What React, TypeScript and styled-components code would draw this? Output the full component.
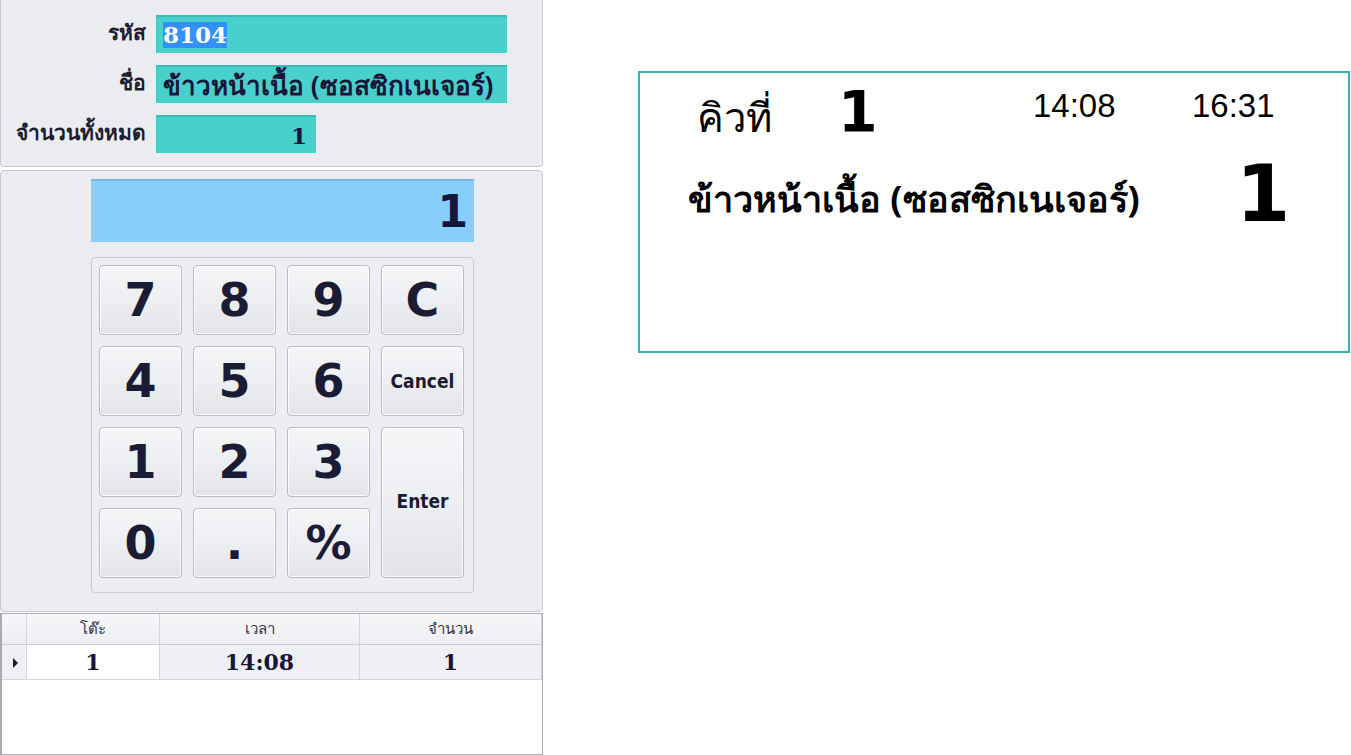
import React from 'react'
import styled, { createGlobalStyle } from 'styled-components'

const GlobalStyle = createGlobalStyle`
  html, body {
    margin: 0;
    padding: 0;
    background: #ffffff;
  }
  body {
    font-family: 'Noto Sans', 'DejaVu Sans', sans-serif;
    color: #1b1b33;
  }
`

const Page = styled.div`
  display: flex;
  align-items: flex-start;
  width: 1351px;
  height: 755px;
  overflow: hidden;
`

const LeftPanel = styled.div`
  width: 543px;
  height: 755px;
  display: flex;
  flex-direction: column;
  gap: 3px;
  background: #ffffff;
  flex-shrink: 0;
`

const Group = styled.div`
  background: #ebecf0;
  border: 1px solid #c6c8cd;
  border-radius: 4px;
  box-sizing: border-box;
`

const InfoGroup = styled(Group)`
  height: 167px;
  border-top: none;
  border-radius: 0 0 4px 4px;
  padding-top: 15px;
  display: flex;
  flex-direction: column;
  gap: 12px;
`

const FieldRow = styled.div`
  display: flex;
  align-items: center;
  gap: 10px;
  height: 38px;
`

const Label = styled.div`
  width: 145px;
  text-align: right;
  font-size: 21px;
  font-weight: 700;
  color: #1d1d30;
  white-space: nowrap;
  margin-top: -4px;
`

const Field = styled.div<{ w: number; align?: string }>`
  width: ${({ w }) => w}px;
  height: 38px;
  box-sizing: border-box;
  background: #48d1cc;
  border-top: 2px solid #3fb9b5;
  border-left: 1px solid #45c4bf;
  padding: 0 9px 0 6px;
  display: flex;
  align-items: center;
  justify-content: ${({ align }) => (align === 'right' ? 'flex-end' : 'flex-start')};
  font-family: 'DejaVu Serif', 'Liberation Serif', serif;
  font-size: 23px;
  font-weight: 700;
  color: #16163a;
  white-space: nowrap;
  overflow: hidden;
`

const ThaiValue = styled.span`
  font-family: 'Noto Sans', 'DejaVu Sans', sans-serif;
  font-size: 26px;
  font-weight: 700;
`

const Selected = styled.span`
  background: #3390ff;
  color: #ffffff;
  line-height: 26px;
`

const PadGroup = styled(Group)`
  height: 442px;
  padding: 8px 0 0 90px;
`

const Display = styled.div`
  width: 383px;
  height: 63px;
  box-sizing: border-box;
  background: #87cefa;
  border-top: 2px solid #79b8e0;
  display: flex;
  align-items: center;
  justify-content: flex-end;
  padding-right: 6px;
  font-family: 'DejaVu Sans', sans-serif;
  font-size: 44px;
  font-weight: 700;
  color: #16163a;
`

const Keypad = styled.div`
  margin-top: 15px;
  width: 383px;
  height: 336px;
  box-sizing: border-box;
  border: 1px solid #c9cbd0;
  border-radius: 4px;
  background: #eceef1;
  padding: 7px 0 0 7px;
  display: grid;
  grid-template-columns: repeat(4, 83px);
  grid-auto-rows: 70px;
  column-gap: 11px;
  row-gap: 11px;
`

const Key = styled.button<{ small?: boolean; tall?: boolean }>`
  margin: 0;
  padding: 0;
  border: 1px solid #b8bbc1;
  border-radius: 4px;
  background: linear-gradient(#f5f6f8 0%, #eceef1 50%, #e2e4e8 100%);
  box-shadow: inset 0 0 0 1px rgba(255, 255, 255, 0.8);
  font-family: ${({ small }) => (small ? "'DejaVu Sans Condensed', 'DejaVu Sans', sans-serif" : "'DejaVu Sans', sans-serif")};
  font-size: ${({ small }) => (small ? '19px' : '46px')};
  font-weight: 700;
  color: #1b1b33;
  grid-row: ${({ tall }) => (tall ? 'span 2' : 'auto')};
  display: flex;
  align-items: center;
  justify-content: center;
  ${({ tall }) => (tall ? 'padding-bottom: 4px;' : '')}
`

const GridBox = styled.div`
  flex: 1;
  border: 1px solid #a9abb0;
  border-left-width: 2px;
  background: #ffffff;
  margin-top: -2px;
`

const Table = styled.table`
  border-collapse: collapse;
  width: 100%;
  table-layout: fixed;
`

const HeadCell = styled.th<{ w?: number }>`
  width: ${({ w }) => (w ? `${w}px` : 'auto')};
  height: 30px;
  padding: 0;
  background: linear-gradient(#f6f7f9, #eceef1);
  border-right: 1px solid #d3d5da;
  border-bottom: 1px solid #c9cbd0;
  font-size: 15px;
  font-weight: 400;
  color: #333344;
`

const Cell = styled.td<{ selected?: boolean }>`
  height: 34px;
  padding: 0;
  text-align: center;
  background: ${({ selected }) => (selected ? '#ffffff' : '#eef0f3')};
  border-right: 1px solid #d3d5da;
  border-bottom: 1px solid #d3d5da;
  font-family: 'DejaVu Serif', 'Liberation Serif', serif;
  font-size: 22px;
  font-weight: 700;
  color: #16163a;
`

const RowHeader = styled.td`
  height: 34px;
  padding: 0;
  background: #eef0f3;
  border-right: 1px solid #d3d5da;
  border-bottom: 1px solid #d3d5da;
  text-align: center;
`

const Arrow = styled.span`
  display: inline-block;
  width: 0;
  height: 0;
  border-top: 5px solid transparent;
  border-bottom: 5px solid transparent;
  border-left: 5px solid #1b1b33;
  margin-left: 2px;
`

const QueueArea = styled.div`
  padding: 71px 0 0 95px;
`

const QueueCard = styled.div`
  width: 712px;
  height: 282px;
  box-sizing: border-box;
  border: 2px solid #39b1b4;
  background: #ffffff;
  padding: 12px 0 0 0;
  color: #000000;
`

const TopLine = styled.div`
  display: grid;
  grid-template-columns: 57px 141px 195px 159px auto;
  align-items: start;
  height: 76px;
`

const QueueLabel = styled.div`
  grid-column: 2;
  font-family: 'Noto Sans', 'DejaVu Sans', sans-serif;
  font-size: 40px;
  line-height: 56px;
  margin-top: 4px;
`

const QueueNo = styled.div`
  font-family: 'DejaVu Sans', sans-serif;
  font-size: 57px;
  font-weight: 700;
  line-height: 52px;
  margin-top: 1px;
`

const Time = styled.div`
  font-family: 'Liberation Sans', Arial, sans-serif;
  font-size: 34px;
  line-height: 34px;
  margin-top: 3px;
  transform: scaleX(0.97);
  transform-origin: left center;
`

const ItemLine = styled.div`
  display: flex;
  align-items: center;
  padding-left: 48px;
`

const ItemName = styled.div`
  width: 548px;
  font-family: 'Noto Sans', 'DejaVu Sans', sans-serif;
  font-size: 36px;
  font-weight: 700;
  white-space: nowrap;
  margin-top: 4px;
`

const ItemQty = styled.div`
  font-family: 'DejaVu Sans', sans-serif;
  font-size: 78px;
  font-weight: 700;
  line-height: 78px;
  margin-top: -6px;
`

const keys = ['7', '8', '9', 'C', '4', '5', '6', 'Cancel', '1', '2', '3', 'Enter', '0', '.', '%']

export default function App() {
  return (
    <Page>
      <GlobalStyle />
      <LeftPanel>
        <InfoGroup>
          <FieldRow>
            <Label>รหัส</Label>
            <Field w={351}>
              <Selected>8104</Selected>
            </Field>
          </FieldRow>
          <FieldRow>
            <Label>ชื่อ</Label>
            <Field w={351}>
              <ThaiValue>ข้าวหน้าเนื้อ (ซอสซิกเนเจอร์)</ThaiValue>
            </Field>
          </FieldRow>
          <FieldRow>
            <Label>จำนวนทั้งหมด</Label>
            <Field w={160} align="right">
              1
            </Field>
          </FieldRow>
        </InfoGroup>
        <PadGroup>
          <Display>1</Display>
          <Keypad>
            {keys.map((k) => (
              <Key key={k} small={k.length > 1} tall={k === 'Enter'}>
                {k}
              </Key>
            ))}
          </Keypad>
        </PadGroup>
        <GridBox>
          <Table>
            <thead>
              <tr>
                <HeadCell w={24} />
                <HeadCell w={132}>โต๊ะ</HeadCell>
                <HeadCell w={199}>เวลา</HeadCell>
                <HeadCell>จำนวน</HeadCell>
              </tr>
            </thead>
            <tbody>
              <tr>
                <RowHeader>
                  <Arrow />
                </RowHeader>
                <Cell selected>1</Cell>
                <Cell>14:08</Cell>
                <Cell>1</Cell>
              </tr>
            </tbody>
          </Table>
        </GridBox>
      </LeftPanel>
      <QueueArea>
        <QueueCard>
          <TopLine>
            <QueueLabel>คิวที่</QueueLabel>
            <QueueNo>1</QueueNo>
            <Time>14:08</Time>
            <Time>16:31</Time>
          </TopLine>
          <ItemLine>
            <ItemName>ข้าวหน้าเนื้อ (ซอสซิกเนเจอร์)</ItemName>
            <ItemQty>1</ItemQty>
          </ItemLine>
        </QueueCard>
      </QueueArea>
    </Page>
  )
}
